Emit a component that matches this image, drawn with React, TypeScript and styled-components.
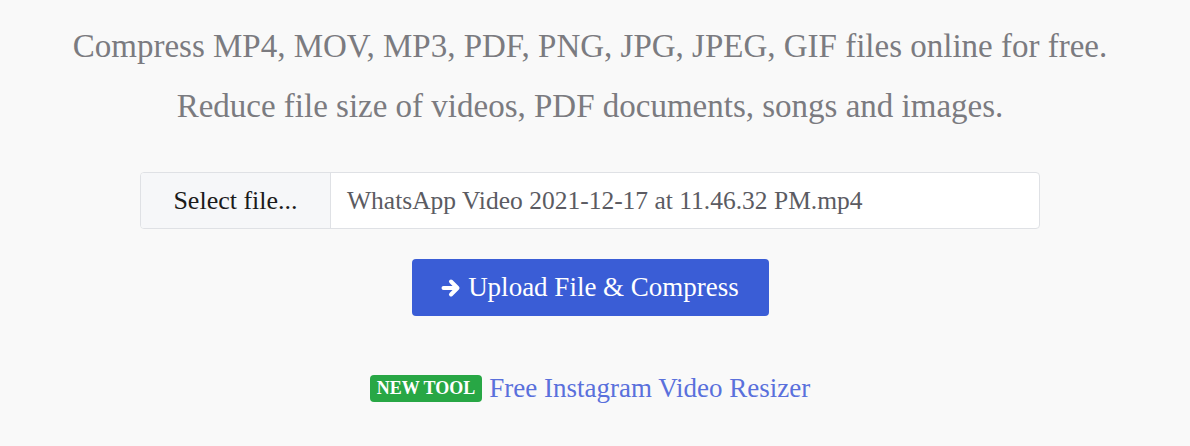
import React from 'react'
import styled, { createGlobalStyle } from 'styled-components'

const GlobalStyle = createGlobalStyle`
  html, body {
    margin: 0;
    padding: 0;
    background: #f9f9f9;
  }
  body {
    font-family: 'Liberation Serif', 'DejaVu Serif', serif;
  }
`

const Page = styled.main`
  width: 1180px;
  display: flex;
  flex-direction: column;
  align-items: center;
  padding-top: 16px;
`

const Lead = styled.p`
  margin: 0;
  font-size: 33px;
  line-height: 60px;
  color: #7b7b80;
  text-align: center;
`

const FileGroup = styled.div`
  margin-top: 36px;
  width: 900px;
  height: 57px;
  display: flex;
  border: 1px solid #dfe1e5;
  border-radius: 4px;
  background: #ffffff;
  box-sizing: border-box;
  overflow: hidden;
`

const SelectLabel = styled.label`
  width: 189px;
  flex: none;
  display: flex;
  align-items: center;
  justify-content: center;
  background: #f6f7f9;
  border-right: 1px solid #dfe1e5;
  font-size: 26px;
  color: #1b1b1b;
  cursor: pointer;
`

const FileName = styled.div`
  flex: 1;
  display: flex;
  align-items: center;
  padding-left: 16px;
  font-size: 25.5px;
  color: #5b5b62;
`

const UploadButton = styled.button`
  margin-top: 30px;
  width: 357px;
  height: 57px;
  border: none;
  border-radius: 4px;
  background: #3a5dd6;
  color: #ffffff;
  font-family: inherit;
  font-size: 27px;
  display: flex;
  align-items: center;
  justify-content: center;
  gap: 7px;
  cursor: pointer;
`

const Promo = styled.div`
  margin-top: 57px;
  display: flex;
  align-items: center;
  gap: 7px;
`

const Badge = styled.span`
  background: #28a745;
  color: #ffffff;
  font-weight: 700;
  font-size: 18px;
  padding: 3px 7px;
  border-radius: 4px;
  line-height: 21px;
`

const PromoLink = styled.a`
  color: #5a70dc;
  font-size: 27px;
  text-decoration: none;
`

// bold right arrow, like the font-awesome one on the original button
const ArrowIcon = () => (
  <svg width='20' height='20' viewBox='0 0 20 20' fill='none'>
    <path
      d='M2.5 10H16M10 3.5L16.5 10L10 16.5'
      stroke='currentColor'
      strokeWidth='4'
      strokeLinecap='round'
      strokeLinejoin='round'
    />
  </svg>
)

export default function App() {
  return (
    <>
      <GlobalStyle />
      <Page>
        <Lead>Compress MP4, MOV, MP3, PDF, PNG, JPG, JPEG, GIF files online for free.</Lead>
        <Lead>Reduce file size of videos, PDF documents, songs and images.</Lead>
        <FileGroup>
          <SelectLabel>Select file...</SelectLabel>
          <FileName>WhatsApp Video 2021-12-17 at 11.46.32 PM.mp4</FileName>
        </FileGroup>
        <UploadButton type='button'>
          <ArrowIcon />
          Upload File &amp; Compress
        </UploadButton>
        <Promo>
          <Badge>NEW TOOL</Badge>
          <PromoLink href='#'>Free Instagram Video Resizer</PromoLink>
        </Promo>
      </Page>
    </>
  )
}
